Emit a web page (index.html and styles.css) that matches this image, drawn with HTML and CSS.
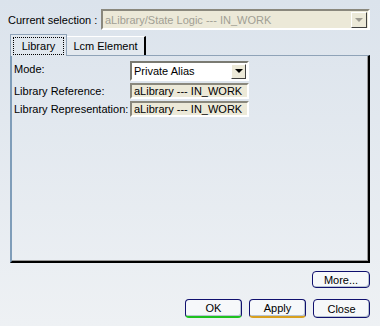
FILE: index.html
```html
<!DOCTYPE html>
<html lang="en">
<head>
  <meta charset="UTF-8" />
  <title>Properties</title>
  <link rel="stylesheet" href="styles.css">
</head>
<body>
  <div class="dialog">
    <div class="selection">
      <span class="sel-label">Current selection :</span>
      <div class="combo disabled">
        <span class="combo-text">aLibrary/State Logic --- IN_WORK</span>
        <span class="combo-btn"><span class="arrow"></span></span>
      </div>
    </div>

    <div class="tabs">
      <div class="tab active"><span class="focus">Library</span></div>
      <div class="tab">Lcm Element</div>
    </div>

    <div class="panel">
      <div class="row">
        <span class="label">Mode:</span>
        <div class="combo mode">
          <span class="combo-text">Private Alias</span>
          <span class="combo-btn"><span class="arrow"></span></span>
        </div>
      </div>
      <div class="row">
        <span class="label">Library Reference:</span>
        <div class="field">aLibrary --- IN_WORK</div>
      </div>
      <div class="row">
        <span class="label">Library Representation:</span>
        <div class="field">aLibrary --- IN_WORK</div>
      </div>
    </div>

    <div class="more-row">
      <button class="btn more">More...</button>
    </div>

    <div class="actions">
      <button class="btn ok">OK</button>
      <button class="btn apply">Apply</button>
      <button class="btn">Close</button>
    </div>
  </div>
</body>
</html>
```

FILE: styles.css
```css
body {
  margin: 0;
  width: 380px;
  height: 326px;
  overflow: hidden;
  font-family: "Liberation Sans", Arial, sans-serif;
  font-size: 11px;
  color: #000;
  background: linear-gradient(#dbe3ec, #eef1f4);
}
.dialog {
  padding: 9px 10px 0 8px;
}
.selection {
  display: flex;
  align-items: center;
  height: 21px;
}
.sel-label {
  width: 93px;
}
.combo {
  display: flex;
  align-items: center;
  box-sizing: border-box;
  border: 2px solid;
  border-color: #7a7a72 #fff #fff #7a7a72;
}
.combo-text {
  flex: 1;
  padding-left: 2px;
  white-space: nowrap;
  overflow: hidden;
}
.combo-btn {
  width: 15px;
  height: 15px;
  box-sizing: border-box;
  border: 1px solid;
  border-color: #fff #404040 #404040 #fff;
  background: #ece9d8;
  display: flex;
  align-items: center;
  justify-content: center;
  margin-right: 1px;
}
.arrow {
  width: 0;
  height: 0;
  border-left: 4px solid transparent;
  border-right: 4px solid transparent;
  border-top: 4px solid #000;
}
.combo.disabled {
  width: 269px;
  height: 21px;
  background: #ece9d8;
  color: #a19f94;
  border-color: #8a887d #fff #fff #8a887d;
}
.combo.disabled .combo-btn {
  width: 16px;
  height: 16px;
}
.combo.disabled .arrow {
  border-top-color: #9c9a90;
}
.tabs {
  display: flex;
  align-items: flex-end;
  margin: 3px 0 0 2px;
  height: 22px;
}
.tab {
  box-sizing: border-box;
  height: 19px;
  padding: 0 11px;
  display: flex;
  align-items: center;
  background: #e3e9ef;
  border: 1px solid #fff;
  border-bottom: none;
  border-right: 2px solid #000;
}
.tab.active {
  height: 22px;
  width: 57px;
  padding: 0 3px;
  justify-content: center;
  border-left: 1px solid #8fa3b8;
  border-top: 1px solid #8fa3b8;
  border-right: 1px solid #8fa3b8;
  margin-bottom: -1px;
  position: relative;
  z-index: 1;
  background: #e0e7ee;
}
.focus {
  border: 1px dotted #000;
  padding: 2px 8px 2px 8px;
}
.tab:not(.active) {
  width: 79px;
  justify-content: center;
  padding: 0;
  border-left: none;
}
.panel {
  box-sizing: border-box;
  margin-left: 2px;
  width: 360px;
  height: 208px;
  border-top: 1px solid #8fa3b8;
  border-left: 2px solid #7f9db9;
  border-right: 2px solid #000;
  border-bottom: 2px solid #000;
  box-shadow: inset -1px -1px 0 #9a9a9a;
  padding: 5px 0 0 2px;
  display: flex;
  flex-direction: column;
  gap: 2px;
}
.row {
  display: flex;
  align-items: center;
}
.label {
  width: 116px;
  white-space: nowrap;
}
.row:first-child .label {
  align-self: flex-start;
  padding-top: 2px;
}
.combo.mode {
  width: 119px;
  height: 20px;
  background: #fff;
}
.field {
  box-sizing: border-box;
  width: 119px;
  height: 16px;
  padding-left: 2px;
  line-height: 12px;
  background: #ece9d8;
  border: 2px solid;
  border-color: #8a887d #fff #fff #8a887d;
}
.more-row {
  display: flex;
  justify-content: flex-end;
  margin-top: 8px;
}
.actions {
  display: flex;
  justify-content: flex-end;
  gap: 7px;
  margin-top: 11px;
}
.btn {
  font-family: inherit;
  font-size: 11px;
  width: 57px;
  height: 19px;
  padding: 0;
  background: #f6f8fa;
  color: #000;
  border: 1px solid #10106e;
  border-radius: 4px;
  box-shadow: inset -1px -1px 0 #b8c4d2;
}
.btn.more {
  width: 58px;
  height: 17px;
}
.btn.ok {
  border-bottom: 2px solid #1ec21e;
}
.btn.apply {
  border-bottom: 2px solid #d8a020;
}
```
